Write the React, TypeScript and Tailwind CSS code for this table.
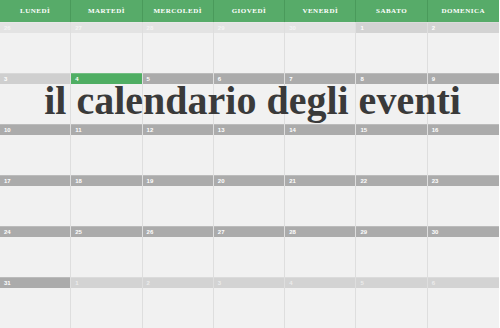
import React from "react";

type Day = { n: number; kind: "prev" | "cur" | "past" | "today" | "next" | "first" };

const GIORNI = ["LUNEDÌ", "MARTEDÌ", "MERCOLEDÌ", "GIOVEDÌ", "VENERDÌ", "SABATO", "DOMENICA"];

const buildWeeks = (): Day[][] => {
  const days: Day[] = [];
  [26, 27, 28, 29, 30].forEach((n) => days.push({ n, kind: "prev" }));
  [1, 2].forEach((n) => days.push({ n, kind: "first" }));
  for (let n = 3; n <= 31; n++) {
    days.push({ n, kind: n === 3 ? "past" : n === 4 ? "today" : "cur" });
  }
  [1, 2, 3, 4, 5, 6].forEach((n) => days.push({ n, kind: "next" }));
  const weeks: Day[][] = [];
  for (let i = 0; i < days.length; i += 7) weeks.push(days.slice(i, i + 7));
  return weeks;
};

const barClass = (kind: Day["kind"]) => {
  switch (kind) {
    case "prev":
      return "bg-[#e3e3e3] text-[#f4f4f4]";
    case "first":
      return "bg-[#d3d3d3] text-white";
    case "past":
      return "bg-[#cfcfcf] text-white";
    case "today":
      return "bg-[#4fae63] text-white";
    case "next":
      return "bg-[#d3d3d3] text-[#ececec]";
    default:
      return "bg-[#ababab] text-white";
  }
};

export default function App() {
  const weeks = buildWeeks();

  return (
    <div className="relative w-[500px] h-[328px] overflow-hidden bg-white font-['Liberation_Serif',serif]">
      <div className="grid grid-cols-7 w-[499px] h-[22px] bg-[#57ab69]">
        {GIORNI.map((g, i) => (
          <div
            key={g}
            className={`flex items-center justify-center text-[7px] font-bold tracking-[0.5px] text-white ${
              i < 6 ? "border-r border-[#4a9a5b]" : ""
            }`}
          >
            {g}
          </div>
        ))}
      </div>

      {weeks.map((week, wi) => (
        <div key={wi} className="grid grid-cols-7 w-[499px] h-[51px]">
          {week.map((d, di) => (
            <div
              key={di}
              className={`flex flex-col bg-[#f1f1f1] ${di < 6 ? "border-r border-[#dedede]" : ""}`}
            >
              <div
                className={`h-[11px] flex items-center pl-[4px] text-[6px] font-['Liberation_Sans',sans-serif] font-bold leading-none border-t border-white/20 ${barClass(
                  d.kind
                )}`}
              >
                {d.n}
              </div>
              <div className="flex-1" />
            </div>
          ))}
        </div>
      ))}

      {/* titolo sopra il calendario */}
      <div className="absolute left-0 right-0 top-[86px] flex justify-center pl-[5px]">
        <h1 className="text-[40px] font-bold leading-[30px] text-[#3a3a3a] font-['Liberation_Serif',serif]">
          il calendario degli eventi
        </h1>
      </div>
    </div>
  );
}
